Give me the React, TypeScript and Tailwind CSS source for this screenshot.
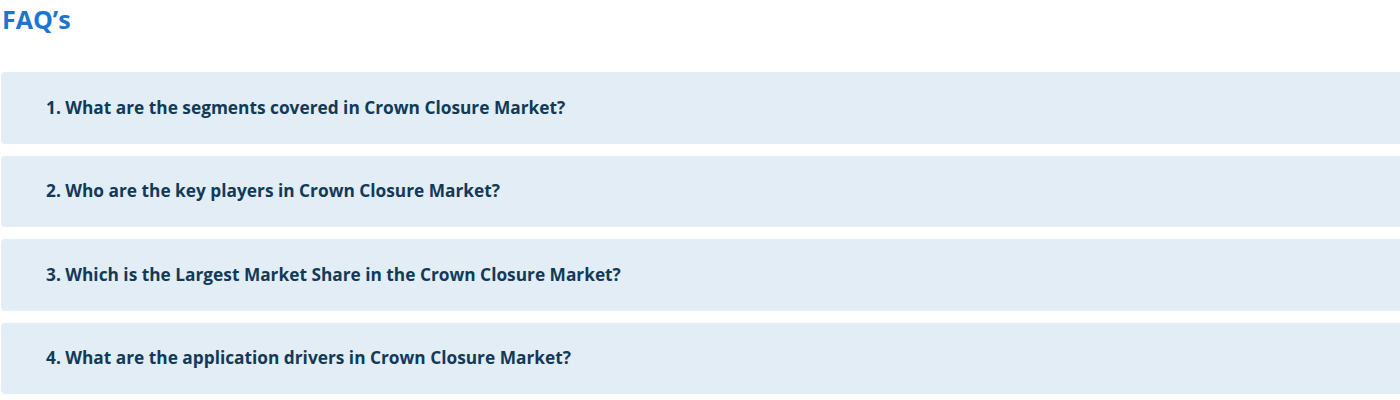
const faqs = [
  "1. What are the segments covered in Crown Closure Market?",
  "2. Who are the key players in Crown Closure Market?",
  "3. Which is the Largest Market Share in the Crown Closure Market?",
  "4. What are the application drivers in Crown Closure Market?",
];

export default function App() {
  return (
    <div className="w-[1400px] overflow-hidden bg-white font-['Open_Sans','Noto_Sans',sans-serif]">
      <h2 className="pl-[2px] pt-[3px] text-[25px] font-bold leading-[32px] text-[#1b76d0]">FAQ&rsquo;s</h2>
      <div className="mt-[37px] flex flex-col gap-[12px] pl-px">
        {faqs.map((q) => (
          <div
            key={q}
            className="flex h-[71.5px] w-[1410px] items-center rounded-[4px] bg-[#e2edf6] pl-[45px]"
          >
            <span className="text-[17.3px] font-bold text-[#123a58]">{q}</span>
          </div>
        ))}
      </div>
    </div>
  );
}
